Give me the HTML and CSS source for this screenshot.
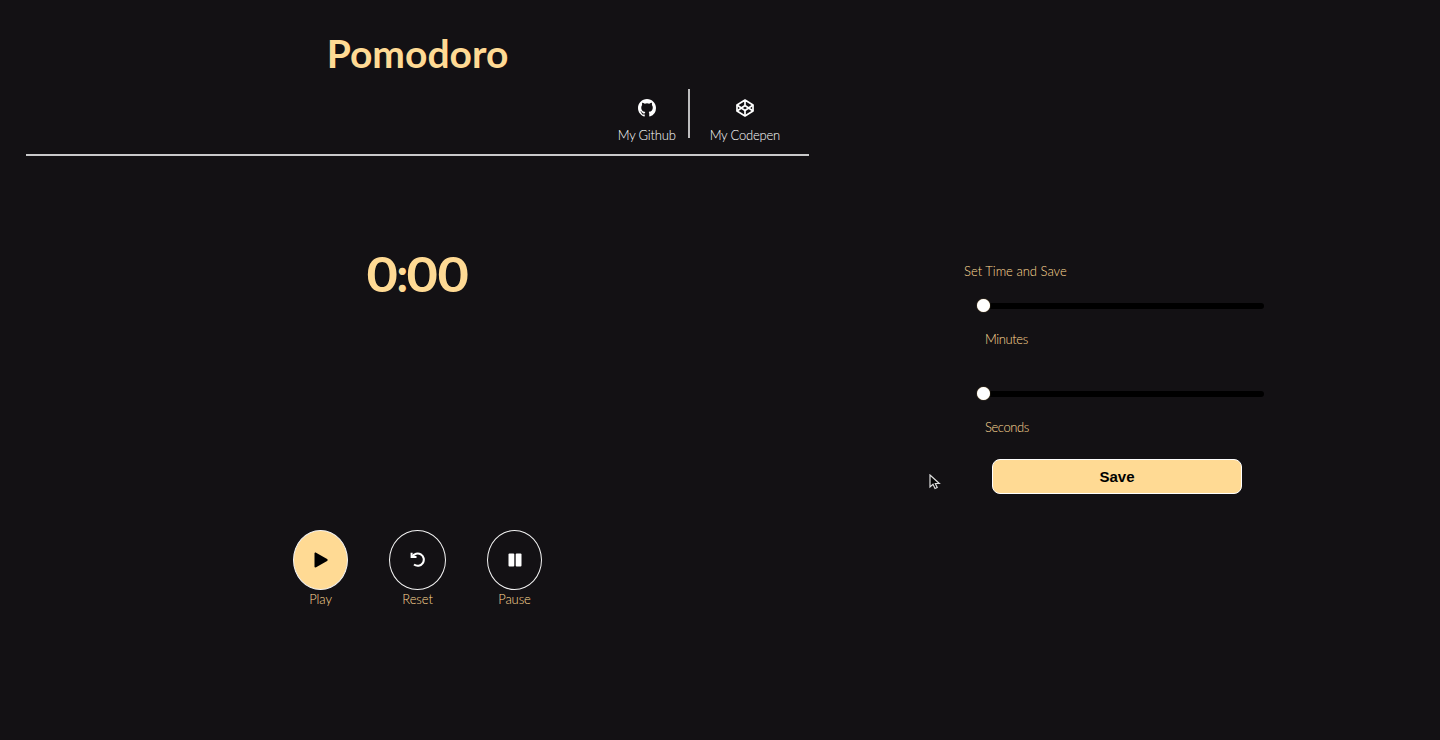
FILE: index.html
```html
<!DOCTYPE html>
<html lang="en">
<head>
<meta charset="utf-8">
<title>Pomodoro</title>
<link rel="stylesheet" href="styles.css">
</head>
<body>
<main class="app">
  <section class="timer">
    <header class="header">
      <h1 class="title">Pomodoro</h1>
      <nav class="links">
        <a class="link github">
          <svg class="link-icon" viewBox="0 0 16 16"><path fill="currentColor" d="M8 0C3.58 0 0 3.58 0 8c0 3.54 2.29 6.53 5.47 7.59.4.07.55-.17.55-.38 0-.19-.01-.82-.01-1.49-2.01.37-2.53-.49-2.69-.94-.09-.23-.48-.94-.82-1.13-.28-.15-.68-.52-.01-.53.63-.01 1.08.58 1.23.82.72 1.21 1.87.87 2.33.66.07-.52.28-.87.51-1.07-1.78-.2-3.64-.89-3.64-3.95 0-.87.31-1.59.82-2.15-.08-.2-.36-1.02.08-2.12 0 0 .67-.21 2.2.82a7.6 7.6 0 0 1 4 0c1.53-1.04 2.2-.82 2.2-.82.44 1.1.16 1.92.08 2.12.51.56.82 1.27.82 2.15 0 3.07-1.87 3.75-3.65 3.95.29.25.54.73.54 1.48 0 1.07-.01 1.93-.01 2.2 0 .21.15.46.55.38A8.01 8.01 0 0 0 16 8c0-4.42-3.58-8-8-8Z"/></svg>
          <span class="link-label">My Github</span>
        </a>
        <a class="link codepen">
          <svg class="link-icon" viewBox="0 0 18 18"><g fill="none" stroke="currentColor" stroke-width="1.7" stroke-linejoin="round"><path d="M9 1 17 6v6l-8 5-8-5V6Z"/><path d="M9 1v5.500M9 17v-5.500M1 6l8 5.500L17 6M1 12l8-5.500 8 5.500"/></g></svg>
          <span class="link-label">My Codepen</span>
        </a>
      </nav>
    </header>
    <div class="clock"><span class="digit">0</span><span class="colon">:</span><span class="digit">0</span><span class="digit">0</span></div>
    <div class="controls">
      <div class="control">
        <button class="round play"><svg class="round-icon" viewBox="0 0 16 16"><path fill="currentColor" d="M1.500 1.600C1.500.7 2.300.3 3.100.7l11 6.300c.8.500.8 1.500 0 2l-11 6.300c-.8.400-1.600 0-1.600-.9Z"/></svg></button>
        <span class="control-label">Play</span>
      </div>
      <div class="control">
        <button class="round reset"><svg class="round-icon" viewBox="0 0 16 16"><path fill="none" stroke="currentColor" stroke-width="2.100" d="M2.300 4.800A6.100 6.100 0 1 1 4 12.500"/><path fill="currentColor" d="M.6.7h2v3.200h3.900v2H.6Z"/></svg></button>
        <span class="control-label">Reset</span>
      </div>
      <div class="control">
        <button class="round pause"><svg class="round-icon" viewBox="0 0 16 16"><rect x="1.500" y="1.500" width="5.800" height="13" rx="1" fill="currentColor"/><rect x="8.700" y="1.500" width="5.800" height="13" rx="1" fill="currentColor"/></svg></button>
        <span class="control-label">Pause</span>
      </div>
    </div>
  </section>
  <section class="settings">
    <p class="heading">Set Time and Save</p>
    <div class="field">
      <div class="slider"><span class="thumb"></span></div>
      <span class="field-label minutes">Minutes</span>
    </div>
    <div class="field">
      <div class="slider"><span class="thumb"></span></div>
      <span class="field-label seconds">Seconds</span>
    </div>
    <button class="save">Save</button>
  </section>
</main>
<svg class="cursor" viewBox="0 0 12 16"><path d="M1 1v12l3-2.700 2 4.200 2.200-1-1.900-4h4Z" fill="#050505" stroke="#ddd" stroke-width="1.200"/></svg>
</body>
</html>
```
FILE: styles.css
```css
* { box-sizing: border-box; }
body {
  margin: 0;
  height: 740px;
  overflow: hidden;
  background: #131114;
  color: #fff;
  font-family: Lato, sans-serif;
}
button { padding: 0; font: inherit; }
.app { display: flex; height: 740px; }
.timer { width: 835px; padding: 26px 26px 0; }
.header { height: 130px; border-bottom: 2px solid #c9c9ca; }
.title {
  margin: 0;
  font-size: 39px;
  line-height: 55px;
  font-weight: 700;
  text-align: center;
  color: #ffda94;
}
.links { display: flex; justify-content: flex-end; margin-top: 8px; }
.link {
  display: flex;
  flex-direction: column;
  align-items: center;
  height: 49px;
  padding-top: 10px;
}
.github { padding-right: 12px; border-right: 2px solid #bdbdbe; }
.codepen { padding: 10px 29px 0 20px; }
.link-icon { flex: none; width: 18px; height: 18px; }
.link-label {
  margin-top: 9px;
  font-size: 13px;
  font-weight: 300;
  line-height: 18px;
  letter-spacing: -0.2px;
  white-space: nowrap;
  color: #fff;
}
.clock {
  display: flex;
  justify-content: center;
  margin-top: 88px;
  line-height: 60px;
  font-size: 47px;
  font-weight: 700;
  color: #ffda94;
}
.digit { width: 30.500px; text-align: center; transform: scaleX(1.15); }
.colon { width: 9.500px; display: flex; justify-content: center; }
.controls { display: flex; justify-content: center; gap: 41px; margin-top: 226px; }
.control { display: flex; flex-direction: column; align-items: center; }
.round {
  display: flex;
  align-items: center;
  justify-content: center;
  height: 60px;
  padding-bottom: 1px;
  border: 1px solid #f3f3f3;
  border-radius: 50%;
  background: transparent;
  color: #fff;
}
.play { width: 55px; background: #ffda94; color: #000; }
.reset { width: 57px; }
.pause { width: 55px; }
.round-icon { flex: none; width: 16px; height: 16px; }
.control-label, .heading, .field-label {
  font-size: 13px;
  font-weight: 300;
  line-height: 20px;
  color: #ffda94;
}
.control-label { line-height: 19px; letter-spacing: -0.1px; }
.settings { padding: 261px 0 0 129px; }
.heading { margin: 0; }
.field { width: 287px; height: 88px; margin-left: 13px; padding-top: 22px; }
.slider {
  display: flex;
  height: 6px;
  border-radius: 3px;
  background: #000;
}
.thumb {
  flex: none;
  width: 13px;
  height: 13px;
  margin-top: -4px;
  border-radius: 50%;
  background: #fff;
  box-shadow: 0 0 1px #ffda94;
}
.field-label { display: block; width: max-content; margin: 20px 0 0 8px; letter-spacing: -0.4px; }
.save {
  display: block;
  width: 250px;
  height: 35px;
  margin: 2px 0 0 28px;
  padding-bottom: 1px;
  border: 1px solid #fff;
  border-radius: 8px;
  background: #ffda94;
  color: #000;
  font: 700 15px "Liberation Sans", Arial, sans-serif;
}
.cursor { position: absolute; left: 929px; top: 474px; width: 12px; height: 16px; }
```
